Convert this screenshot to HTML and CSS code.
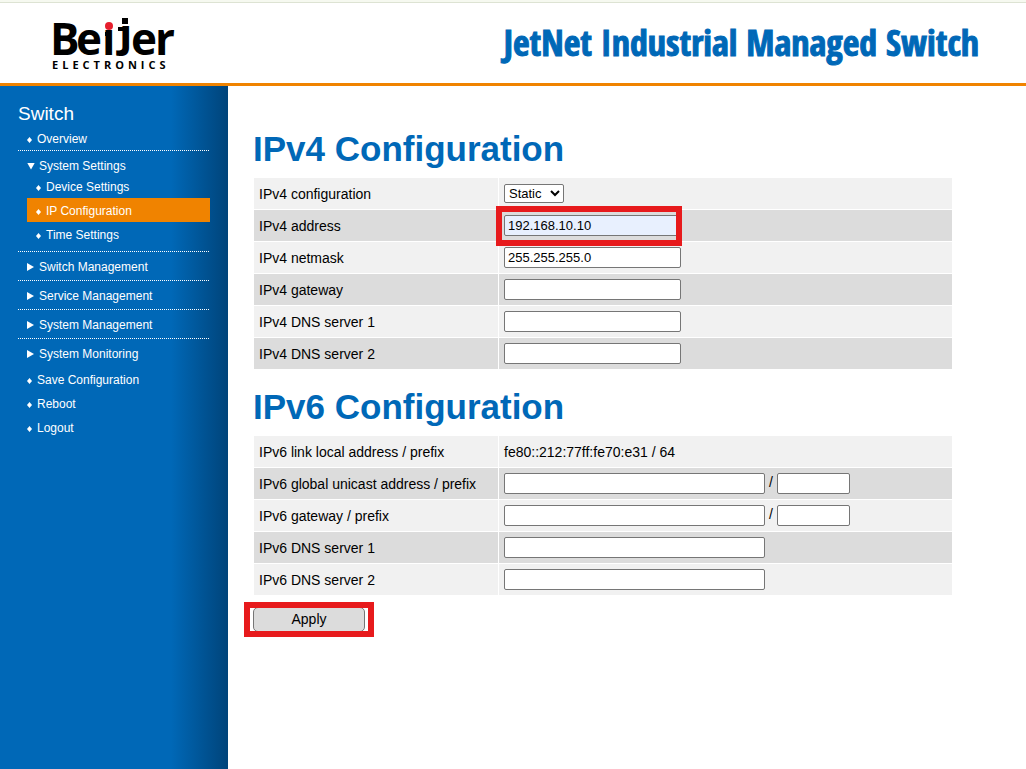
FILE: index.html
```
<!DOCTYPE html>
<html lang="en">
<head>
    <meta charset="UTF-8">
    <meta name="viewport" content="width=device-width, initial-scale=1.0">
    <title>JetNet Industrial Managed Switch</title>
    <link rel="stylesheet" href="styles.css">
</head>
<body>
    <!-- Header -->
    <header class="header">
        <svg class="logo" width="124" height="54" viewBox="0 0 124 54" role="img" aria-label="Beijer Electronics">
            <text class="logo-name" x="-2 24 50 67 79 103" y="39 39 39 29 39 39">Beijer</text>
            <rect x="51" y="2" width="12" height="12" fill="#fff"/>
            <rect x="65" y="-7" width="14" height="17" fill="#fff"/>
            <circle cx="57" cy="10" r="4" fill="#e61e2d"/>
            <rect x="70" y="2" width="6" height="6"/>
            <rect x="66" y="11" width="10" height="4"/>
            <rect x="53" y="16" width="6" height="4"/>
            <text class="logo-sub" x="0" y="53">ELECTRONICS</text>
        </svg>
        <div class="product">JetNet Industrial Managed Switch</div>
    </header>

    <div class="page">
        <!-- Sidebar -->
        <nav class="sidebar">
            <div class="menu-title">Switch</div>
            <ul class="menu">
                <li class="divided"><a class="item" href="#">Overview</a></li>
                <li class="group open divided">
                    <a class="toggle" href="#">System Settings</a>
                    <ul class="submenu">
                        <li><a class="item" href="#">Device Settings</a></li>
                        <li><a class="item active" href="#">IP Configuration</a></li>
                        <li><a class="item" href="#">Time Settings</a></li>
                    </ul>
                </li>
                <li class="group divided"><a class="toggle" href="#">Switch Management</a></li>
                <li class="group divided"><a class="toggle" href="#">Service Management</a></li>
                <li class="group divided"><a class="toggle" href="#">System Management</a></li>
                <li class="group"><a class="toggle" href="#">System Monitoring</a></li>
                <li><a class="item" href="#">Save Configuration</a></li>
                <li><a class="item" href="#">Reboot</a></li>
                <li><a class="item" href="#">Logout</a></li>
            </ul>
        </nav>

        <!-- Main content -->
        <main class="content">
            <form>
                <h1>IPv4 Configuration</h1>
                <table class="settings">
                    <tr>
                        <td><label for="mode">IPv4 configuration</label></td>
                        <td>
                            <select id="mode">
                                <option>Static</option>
                                <option>DHCP</option>
                            </select>
                        </td>
                    </tr>
                    <tr>
                        <td><label for="ip4">IPv4 address</label></td>
                        <td><span class="mark mark-input"><input type="text" id="ip4" class="filled" value="192.168.10.10"></span></td>
                    </tr>
                    <tr>
                        <td><label for="netmask">IPv4 netmask</label></td>
                        <td><input type="text" id="netmask" value="255.255.255.0"></td>
                    </tr>
                    <tr>
                        <td><label for="gateway4">IPv4 gateway</label></td>
                        <td><input type="text" id="gateway4"></td>
                    </tr>
                    <tr>
                        <td><label for="dns41">IPv4 DNS server 1</label></td>
                        <td><input type="text" id="dns41"></td>
                    </tr>
                    <tr>
                        <td><label for="dns42">IPv4 DNS server 2</label></td>
                        <td><input type="text" id="dns42"></td>
                    </tr>
                </table>

                <h1>IPv6 Configuration</h1>
                <table class="settings">
                    <tr>
                        <td>IPv6 link local address / prefix</td>
                        <td>fe80::212:77ff:fe70:e31 / 64</td>
                    </tr>
                    <tr>
                        <td><label for="ip6">IPv6 global unicast address / prefix</label></td>
                        <td>
                            <input type="text" id="ip6" class="long"> /
                            <input type="text" class="short" aria-label="IPv6 global unicast prefix">
                        </td>
                    </tr>
                    <tr>
                        <td><label for="gateway6">IPv6 gateway / prefix</label></td>
                        <td>
                            <input type="text" id="gateway6" class="long"> /
                            <input type="text" class="short" aria-label="IPv6 gateway prefix">
                        </td>
                    </tr>
                    <tr>
                        <td><label for="dns61">IPv6 DNS server 1</label></td>
                        <td><input type="text" id="dns61" class="long"></td>
                    </tr>
                    <tr>
                        <td><label for="dns62">IPv6 DNS server 2</label></td>
                        <td><input type="text" id="dns62" class="long"></td>
                    </tr>
                </table>

                <div class="actions">
                    <span class="mark mark-button"><button type="button">Apply</button></span>
                </div>
            </form>
        </main>
    </div>
</body>
</html>
```
FILE: styles.css
```
* {
    margin: 0;
    padding: 0;
    box-sizing: border-box;
}

body {
    font-family: Arial, "Liberation Sans", sans-serif;
    font-size: 14px;
    color: #000;
    background: #fff;
    display: flex;
    flex-direction: column;
    min-height: 100vh;
    border-top: 2px solid #f6f9f0;
}

/* Header */
.header {
    display: flex;
    justify-content: space-between;
    align-items: center;
    height: 84px;
    padding: 0 47px 0 52px;
    border-top: 1px solid #dde3d3;
    border-bottom: 3px solid #f08300;
}

.logo {
    overflow: visible;
}

.logo-name {
    font-family: "Open Sans", sans-serif;
    font-size: 44px;
    font-weight: 700;
}

.logo-sub {
    font-family: "Open Sans", sans-serif;
    font-size: 11px;
    font-weight: 700;
    letter-spacing: 4px;
}

.product {
    font-family: Impact, "Noto Sans ExtraCondensed", "Open Sans Condensed", "Roboto Condensed", Roboto, sans-serif;
    font-size: 36px;
    line-height: 40px;
    font-weight: 900;
    color: #0068b7;
    -webkit-text-stroke: 1px #0068b7;
}

.page {
    display: flex;
    flex: 1;
}

/* Sidebar */
.sidebar {
    width: 228px;
    flex-shrink: 0;
    padding: 16px 18px;
    background: linear-gradient(to right, #0068b7 75%, #00447a);
    color: #fff;
}

.menu-title {
    font-size: 19px;
    line-height: 24px;
}

.menu,
.submenu {
    list-style: none;
}

.menu a {
    display: flex;
    align-items: center;
    padding-top: 2px;
    color: #fff;
    font-size: 12px;
    text-decoration: none;
}

.menu .item {
    height: 24px;
    gap: 5px;
    padding-left: 9px;
}

/* small diamond bullet */
.item::before {
    content: "";
    width: 5px;
    height: 6px;
    margin-top: 2px;
    background: #fff;
    clip-path: polygon(50% 0, 100% 50%, 50% 100%, 0 50%);
}

.divided {
    background: repeating-linear-gradient(to right, #fff 0 1px, transparent 1px 2px) bottom / 100% 1px no-repeat;
    padding-bottom: 1px;
}

.toggle {
    height: 18px;
    margin-left: 9px;
    gap: 5px;
}

.group {
    padding-top: 5px;
    padding-bottom: 5px;
}

.group.divided {
    padding-bottom: 6px;
}

.toggle::before {
    content: "";
    width: 7px;
    height: 8px;
    background: #fff;
    clip-path: polygon(0 0, 100% 50%, 0 100%);
}

.open .toggle::before {
    width: 8px;
    height: 7px;
    margin-right: -1px;
    clip-path: polygon(0 0, 100% 0, 50% 100%);
}

.submenu {
    margin-left: 9px;
}

.menu .active {
    background: #f08300;
}

/* Main content */
.content {
    flex: 1;
    padding: 26px 25px;
}

h1 {
    margin: 17px 0 8px;
    font-size: 35px;
    line-height: 40px;
    color: #0068b7;
}

.settings {
    width: 100%;
    max-width: 700px;
    border-spacing: 1px;
}

.settings td {
    height: 31px;
    padding: 0 5px;
    background: #f1f1f1;
}

.settings td:first-child {
    width: 244px;
}

.settings tr:nth-child(even) td {
    background: #dcdcdc;
}

input,
select {
    font-family: inherit;
    font-size: 13px;
    color: #000;
    background: #fff;
    border: 1px solid #767676;
    border-radius: 2px;
    vertical-align: middle;
}

input {
    width: 177px;
    height: 21px;
    padding: 0 3px;
}

select {
    width: 60px;
    height: 19px;
}

.filled {
    background: #e8f0fe;
}

.long {
    width: 261px;
}

.short {
    width: 73px;
}

.actions {
    padding-top: 11px;
}

button {
    width: 112px;
    height: 25px;
    padding-bottom: 2px;
    font-family: inherit;
    font-size: 14px;
    color: #000;
    background: #dcdcdc;
    border: 1px solid #767676;
    border-radius: 5px;
}

/* Red callout frames */
.mark {
    position: relative;
    display: inline-block;
    vertical-align: middle;
}

.mark::after {
    content: "";
    position: absolute;
    border: 6px solid #e71a1c;
    pointer-events: none;
}

.mark-input::after {
    inset: -9px -1px -10px -8px;
}

.mark-button::after {
    inset: -5px -9px -5px -9px;
}
```
